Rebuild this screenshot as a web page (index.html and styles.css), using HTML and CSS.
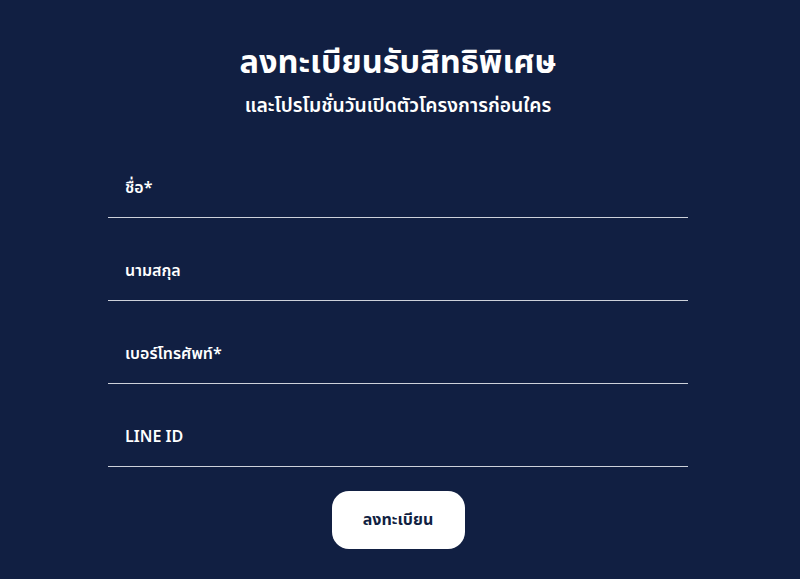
FILE: index.html
```html
<!DOCTYPE html>
<html lang="th">
<head>
<meta charset="utf-8">
<link rel="stylesheet" href="styles.css">
</head>
<body>
<main class="page">
  <h1 class="title">ลงทะเบียนรับสิทธิพิเศษ</h1>
  <p class="subtitle">และโปรโมชั่นวันเปิดตัวโครงการก่อนใคร</p>
  <form class="form">
    <div class="field"><span class="label">ชื่อ*</span></div>
    <div class="field"><span class="label">นามสกุล</span></div>
    <div class="field"><span class="label">เบอร์โทรศัพท์*</span></div>
    <div class="field"><span class="label">LINE ID</span></div>
    <div class="actions"><button type="button" class="btn">ลงทะเบียน</button></div>
  </form>
</main>
</body>
</html>
```
FILE: styles.css
```css
html, body {
  margin: 0;
  padding: 0;
  background: #111f42;
  height: 100%;
}
body {
  font-family: "Noto Sans Thai", "Noto Sans Thai UI", "Noto Sans", "Liberation Sans", sans-serif;
  color: #ffffff;
}
.page {
  display: flex;
  flex-direction: column;
  align-items: center;
  padding-top: 41px;
  padding-right: 4px;
}
.title {
  margin: 0;
  font-size: 32.5px;
  font-weight: 700;
  line-height: 46px;
}
.subtitle {
  margin: 0;
  font-size: 19.3px;
  font-weight: 600;
  line-height: 30px;
  margin-top: 5px;
}
.form {
  width: 580px;
  margin-top: 13px;
  display: flex;
  flex-direction: column;
}
.field {
  height: 83px;
  border-bottom: 1px solid #cdd1da;
  box-sizing: border-box;
  display: flex;
  align-items: flex-end;
  padding-left: 17px;
  padding-bottom: 18px;
}
.label {
  font-size: 16px;
  font-weight: 600;
  line-height: 22px;
}
.actions {
  display: flex;
  justify-content: center;
  padding-top: 24px;
}
.btn {
  width: 133px;
  height: 58px;
  border: none;
  border-radius: 17px;
  background: #ffffff;
  color: #111f42;
  font-family: inherit;
  font-size: 16px;
  font-weight: 700;
}
```
